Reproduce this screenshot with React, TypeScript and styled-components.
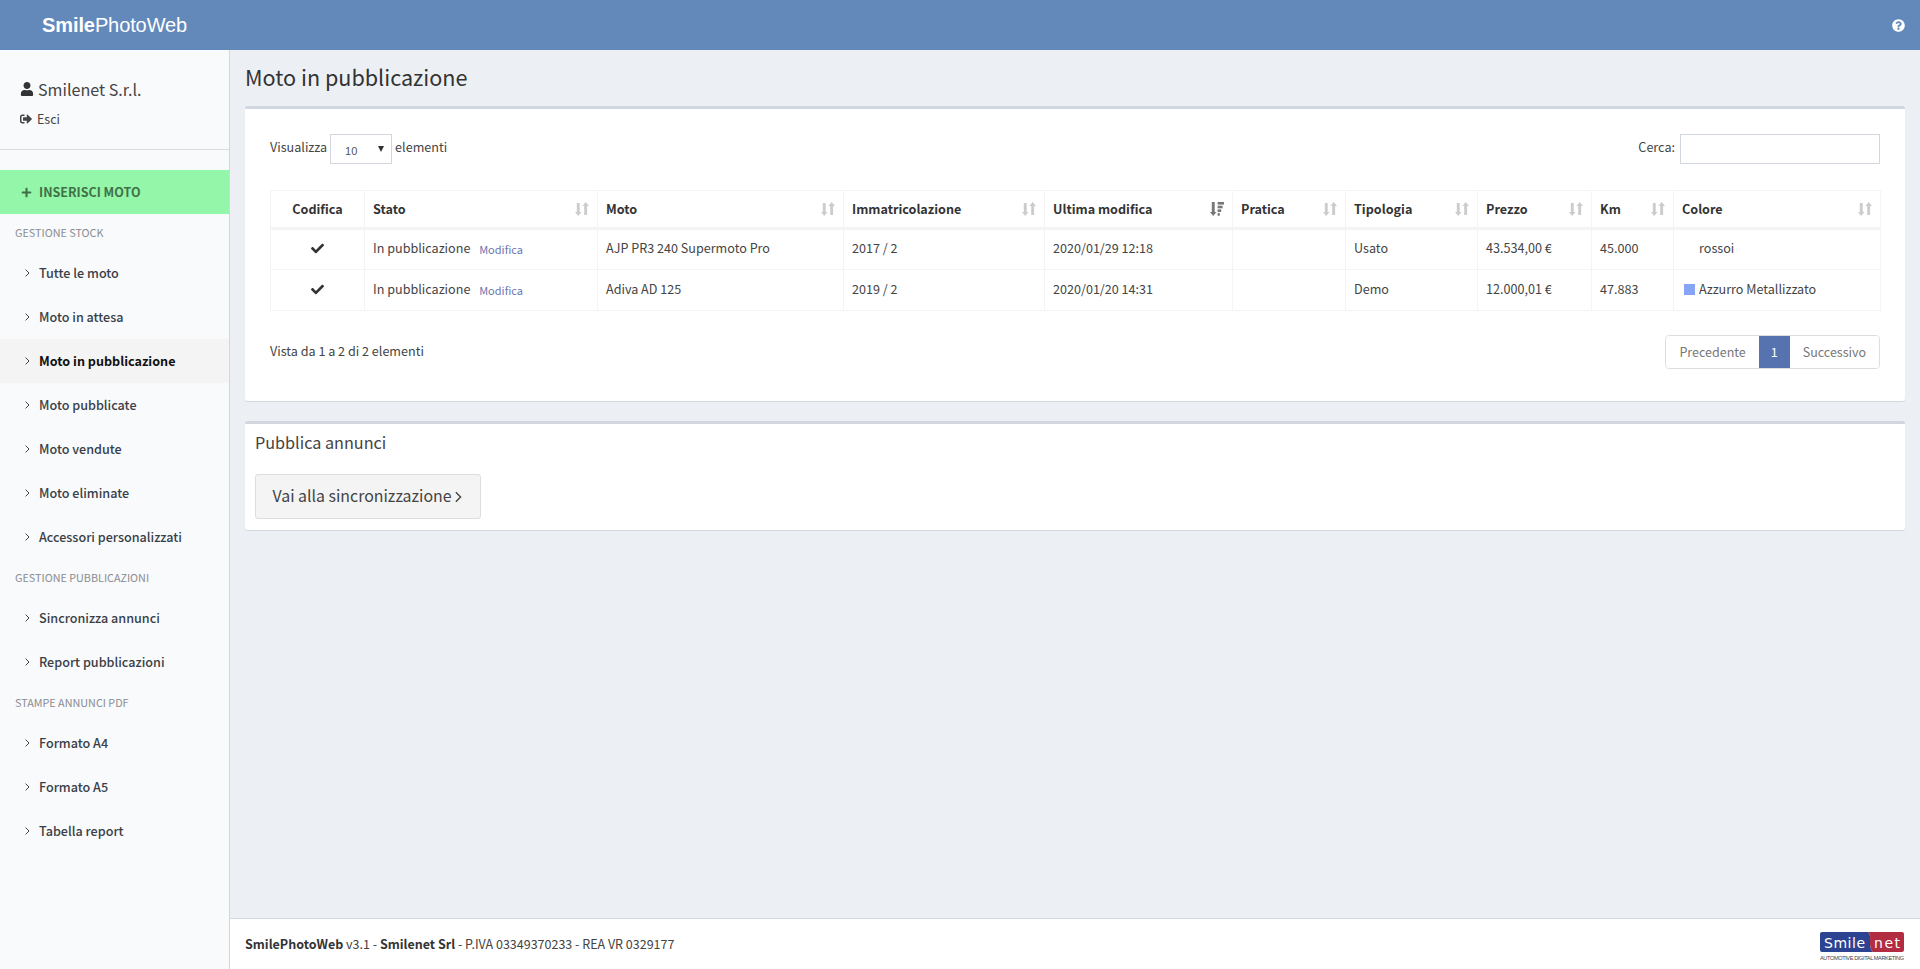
import React from 'react';
import styled, { createGlobalStyle } from 'styled-components';
import { FaUser, FaSignOutAlt, FaPlus, FaCheck, FaQuestionCircle } from 'react-icons/fa';

const FONT = '"Noto Sans CJK SC", "Noto Sans", sans-serif';

const Global = createGlobalStyle`
  html, body { margin: 0; padding: 0; height: 100%; overflow: hidden; }
  body { font-family: ${FONT}; font-size: 12.6px; color: #333; background: #ecf0f5; }
  * { box-sizing: border-box; }
`;

const Page = styled.div`display: flex; flex-direction: column; height: 969px;`;
const Header = styled.header`
  height: 50px; flex: none; background: #6389bb; display: flex; align-items: center;
  justify-content: space-between; padding: 0 15px 0 42px; color: #fff;
`;
const Brand = styled.div`font-family: "Liberation Sans", Arial, sans-serif; font-size: 20px; letter-spacing: -0.1px; b { font-weight: 700; }`;
const HelpIcon = styled.span`display: flex; font-size: 13px;`;
const Body = styled.div`flex: 1; display: flex; min-height: 0;`;
const Sidebar = styled.aside`width: 230px; flex: none; background: #f9fafc; border-right: 1px solid #d2d6de;`;
const UserBlock = styled.div`height: 100px; border-bottom: 1px solid #d8dbe0; padding: 27px 20px 0; margin-bottom: 20px;`;
const UserName = styled.div`display: flex; align-items: center; gap: 4px; font-size: 16.1px; line-height: 24px; color: #444; svg { font-size: 14px; color: #333; }`;
const Logout = styled.div`display: flex; align-items: center; gap: 5px; margin-top: 9px; font-size: 12.5px; line-height: 18px; color: #444; svg { font-size: 12px; }`;
const InsertBtn = styled.div`
  height: 44px; background: #94f6a8; display: flex; align-items: center; gap: 7px; padding: 0 0 2px 21px;
  font-size: 12.5px; font-weight: 700; color: #3f7148; svg { font-size: 11px; margin-top: 2px; }
`;
const SectionLabel = styled.div`height: 37px; display: flex; align-items: center; padding: 0 0 2px 15px; font-size: 10.8px; color: #8a8d91;`;
const NavItem = styled.div<{ $active?: boolean }>`
  height: 44px; display: flex; align-items: center; gap: 9px; padding: 0 0 2px 25px; font-size: 12.6px;
  font-weight: ${p => (p.$active ? 700 : 500)}; color: ${p => (p.$active ? '#111' : '#3a3f47')};
  background: ${p => (p.$active ? '#f4f4f5' : 'transparent')};
  svg { margin-top: 2px; }
`;
const Main = styled.main`flex: 1; min-width: 0; display: flex; flex-direction: column;`;
const Content = styled.div`flex: 1; padding: 0 15px;`;
const Title = styled.h1`margin: 0; height: 56px; display: flex; align-items: center; padding-bottom: 2px; font-size: 21.6px; font-weight: 400; color: #333; line-height: 1;`;
const Panel = styled.section`
  background: #fff; border-top: 3px solid #d2d6de; border-radius: 3px; margin-bottom: 20px;
  box-shadow: 0 1px 1px rgba(0,0,0,.1);
`;
const TablePanel = styled(Panel)`height: 295px; padding: 25px 25px 0;`;
const Controls = styled.div`display: flex; justify-content: space-between; align-items: center; height: 30px; margin-bottom: 26px;`;
const Length = styled.div`display: flex; align-items: center; gap: 3px; color: #444; line-height: 20px; span { position: relative; top: -2px; }`;
const SelectBox = styled.div`
  width: 62px; height: 30px; border: 1px solid #d2d6de; display: flex; align-items: center; justify-content: space-between;
  padding: 3px 7px 0 14px; font: 11px "Liberation Sans", Arial, sans-serif; color: #555;
`;
const Triangle = styled.i`width: 0; height: 0; border-left: 3.5px solid transparent; border-right: 3.5px solid transparent; border-top: 6px solid #333; margin-top: -3px;`;
const Search = styled.div`display: flex; align-items: center; gap: 5px; color: #444; span { position: relative; top: -3px; }`;
const SearchInput = styled.input`width: 200px; height: 30px; border: 1px solid #d2d6de; outline: none; background: #fff; padding: 0;`;
const Table = styled.table`border-collapse: collapse; table-layout: fixed; width: 1610px; font-size: 12.6px; line-height: 18px;`;
const Th = styled.th`
  height: 38px; padding: 0 8px; border: 1px solid #f4f4f4; border-bottom: 3px solid #f4f4f4; font-weight: 700; font-size: 12.6px; color: #333; text-align: left;
`;
const CenterTh = styled(Th)`text-align: center;`;
const ThInner = styled.div`display: flex; align-items: center; justify-content: space-between;`;
const Td = styled.td`height: 41px; padding: 0 8px 3px; border: 1px solid #f4f4f4; color: #444;`;
const CheckTd = styled(Td)`text-align: center; color: #333; padding-bottom: 1px; svg { font-size: 13px; display: inline-block; vertical-align: -1px; }`;
const EditLink = styled.a`font-size: 11px; color: #6a75b0; margin-left: 6px; position: relative; top: 1px;`;
const Swatch = styled.i<{ $color: string }>`display: inline-block; width: 11px; height: 11px; background: ${p => p.$color}; margin: 0 4px 0 2px; vertical-align: -1px;`;
const TableFooter = styled.div`display: flex; justify-content: space-between; align-items: center; margin-top: 24px;`;
const Info = styled.div`color: #444; position: relative; top: -2px;`;
const Pager = styled.div`display: flex; height: 34px; border: 1px solid #ddd; border-radius: 4px; overflow: hidden;`;
const PageBtn = styled.div<{ $active?: boolean }>`
  display: flex; align-items: center; padding: 0 ${p => (p.$active ? 12 : 13)}px 2px; font-size: 12.5px;
  color: ${p => (p.$active ? '#fff' : '#777')}; background: ${p => (p.$active ? '#5673b0' : '#fff')};
  margin: ${p => (p.$active ? '-1px 0' : '0')};
`;
const PublishPanel = styled(Panel)`height: 109px; padding: 0 10px;`;
const PublishTitle = styled.h3`margin: 0 0 14px; height: 36px; display: flex; align-items: center; font-size: 16.2px; font-weight: 400; color: #444;`;
const SyncBtn = styled.div`
  width: 226px; height: 45px; display: flex; align-items: center; justify-content: center; gap: 3px; font-size: 15.9px; color: #444;
  padding: 0 2px 2px 0; background: #f4f4f4; border: 1px solid #ddd; border-radius: 3px; svg { margin-top: 2px; }
`;
const Footer = styled.footer`
  height: 51px; flex: none; background: #fff; border-top: 1px solid #d2d6de; display: flex; align-items: center;
  justify-content: space-between; padding: 0 16px 0 15px; font-size: 12.5px; color: #444; b { font-weight: 700; color: #333; }
`;
const FooterText = styled.div`position: relative; top: -1px;`;
const LogoSvg = styled.svg`display: block; width: 84px; height: 32px; margin-top: 5px;`;

const Chevron = ({ size = 8 }: { size?: number }) => (
  <svg width={size / 2 + 1} height={size} viewBox="0 0 5 8" fill="none" stroke="#444" strokeWidth="1" style={{ flex: 'none' }}>
    <path d="M.6.6 4 4 .6 7.4" />
  </svg>
);

const SortIcon = ({ active }: { active?: boolean }) => (
  <svg width="14" height="14" viewBox="0 0 14 14" fill={active ? '#777' : '#ccc'} style={{ flex: 'none' }}>
    {active ? (
      <>
        <path d="M1.8 0h2.9v10h1.8L3.2 14 0 10h1.8z" />
        <rect x="7.6" y="0" width="6.4" height="2.6" />
        <rect x="7.6" y="3.7" width="5" height="2.6" />
        <rect x="7.6" y="7.4" width="3.6" height="2.6" />
        <rect x="7.6" y="11.1" width="2.2" height="2.6" />
      </>
    ) : (
      <>
        <path d="M1.8 1h2.9v9h1.8L3.2 14 0 10h1.8z" />
        <path d="M9.2 13h2.9V4H14L10.7 0 7.4 4h1.8z" />
      </>
    )}
  </svg>
);

const Logo = () => (
  <LogoSvg viewBox="0 0 84 32">
    <path d="M2 1h46c3 3 2 7 2 10s0 7 3 10H2a2 2 0 0 1-2-2V3a2 2 0 0 1 2-2z" fill="#2c4391" />
    <path d="M48 1h34a2 2 0 0 1 2 2v16a2 2 0 0 1-2 2H53c-3-3-3-7-3-10s1-7-2-10z" fill="#b22c42" />
    <text x="4" y="16.5" fontFamily="DejaVu Sans, sans-serif" fontSize="14" textLength="41" fill="#fff">Smile</text>
    <text x="54" y="16.5" fontFamily="DejaVu Sans, sans-serif" fontSize="14" textLength="26" fill="#fff">net</text>
    <text x="0" y="29" fontFamily="Liberation Sans, sans-serif" fontSize="5.6" textLength="84" fill="#444">AUTOMOTIVE DIGITAL MARKETING</text>
  </LogoSvg>
);

const columns = [
  { label: 'Stato', w: 233 },
  { label: 'Moto', w: 246 },
  { label: 'Immatricolazione', w: 201 },
  { label: 'Ultima modifica', w: 188, active: true },
  { label: 'Pratica', w: 113 },
  { label: 'Tipologia', w: 132 },
  { label: 'Prezzo', w: 114 },
  { label: 'Km', w: 82 },
  { label: 'Colore', w: 207 },
];

const rows = [
  { moto: 'AJP PR3 240 Supermoto Pro', imm: '2017 / 2', date: '2020/01/29 12:18', tipo: 'Usato', prezzo: '43.534,00 €', km: '45.000', color: 'transparent', colore: 'rossoi' },
  { moto: 'Adiva AD 125', imm: '2019 / 2', date: '2020/01/20 14:31', tipo: 'Demo', prezzo: '12.000,01 €', km: '47.883', color: '#86a5f5', colore: 'Azzurro Metallizzato' },
];

const nav = [
  { label: 'GESTIONE STOCK', items: ['Tutte le moto', 'Moto in attesa', 'Moto in pubblicazione', 'Moto pubblicate', 'Moto vendute', 'Moto eliminate', 'Accessori personalizzati'] },
  { label: 'GESTIONE PUBBLICAZIONI', items: ['Sincronizza annunci', 'Report pubblicazioni'] },
  { label: 'STAMPE ANNUNCI PDF', items: ['Formato A4', 'Formato A5', 'Tabella report'] },
];

export default function App() {
  return (
    <Page>
      <Global />
      <Header>
        <Brand><b>Smile</b>PhotoWeb</Brand>
        <HelpIcon><FaQuestionCircle /></HelpIcon>
      </Header>
      <Body>
        <Sidebar>
          <UserBlock>
            <UserName><FaUser /> Smilenet S.r.l.</UserName>
            <Logout><FaSignOutAlt /> Esci</Logout>
          </UserBlock>
          <InsertBtn><FaPlus /> INSERISCI MOTO</InsertBtn>
          {nav.map(s => (
            <React.Fragment key={s.label}>
              <SectionLabel>{s.label}</SectionLabel>
              {s.items.map(i => (
                <NavItem key={i} $active={i === 'Moto in pubblicazione'}><Chevron /> {i}</NavItem>
              ))}
            </React.Fragment>
          ))}
        </Sidebar>
        <Main>
          <Content>
            <Title>Moto in pubblicazione</Title>
            <TablePanel>
              <Controls>
                <Length><span>Visualizza</span><SelectBox>10<Triangle /></SelectBox><span>elementi</span></Length>
                <Search><span>Cerca:</span> <SearchInput /></Search>
              </Controls>
              <Table>
                <colgroup>
                  <col width={94} />
                  {columns.map(c => <col key={c.label} width={c.w} />)}
                </colgroup>
                <thead>
                  <tr>
                    <CenterTh>Codifica</CenterTh>
                    {columns.map(c => (
                      <Th key={c.label}><ThInner>{c.label}<SortIcon active={c.active} /></ThInner></Th>
                    ))}
                  </tr>
                </thead>
                <tbody>
                  {rows.map(r => (
                    <tr key={r.moto}>
                      <CheckTd><FaCheck /></CheckTd>
                      <Td>In pubblicazione <EditLink>Modifica</EditLink></Td>
                      <Td>{r.moto}</Td>
                      <Td>{r.imm}</Td>
                      <Td>{r.date}</Td>
                      <Td />
                      <Td>{r.tipo}</Td>
                      <Td>{r.prezzo}</Td>
                      <Td>{r.km}</Td>
                      <Td><Swatch $color={r.color} />{r.colore}</Td>
                    </tr>
                  ))}
                </tbody>
              </Table>
              <TableFooter>
                <Info>Vista da 1 a 2 di 2 elementi</Info>
                <Pager>
                  <PageBtn>Precedente</PageBtn>
                  <PageBtn $active>1</PageBtn>
                  <PageBtn>Successivo</PageBtn>
                </Pager>
              </TableFooter>
            </TablePanel>
            <PublishPanel>
              <PublishTitle>Pubblica annunci</PublishTitle>
              <SyncBtn>Vai alla sincronizzazione <Chevron size={12} /></SyncBtn>
            </PublishPanel>
          </Content>
          <Footer>
            <FooterText><b>SmilePhotoWeb</b> v3.1 - <b>Smilenet Srl</b> - P.IVA 03349370233 - REA VR 0329177</FooterText>
            <Logo />
          </Footer>
        </Main>
      </Body>
    </Page>
  );
}
